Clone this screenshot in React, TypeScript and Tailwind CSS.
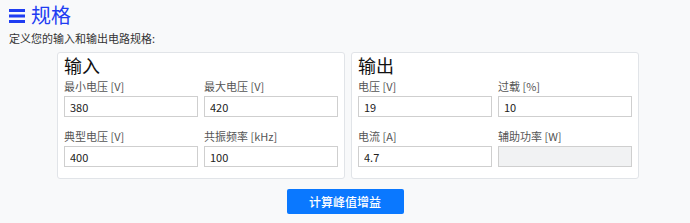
import React from "react";

const font = "font-['Noto_Sans_CJK_SC','Noto_Sans',sans-serif]";

type Field = { label: string; value: string; disabled?: boolean };

const Panel = ({ title, fields }: { title: string; fields: Field[] }) => (
  <div className="w-[288px] bg-white border border-[#e1e4e8] rounded-[3px] px-[6px] pt-[1px] pb-[11px]">
    <h2 className="text-[18px] leading-[22px] font-normal text-[#111] mb-[3px]">{title}</h2>
    <div className="grid grid-cols-2 gap-x-[6px] gap-y-[12px]">
      {fields.map((f) => (
        <div key={f.label}>
          <label className="block text-[11px] leading-[14px] text-[#555] mb-[3px]">{f.label}</label>
          <input
            readOnly
            disabled={f.disabled}
            value={f.value}
            className={
              "block w-full h-[21px] border border-[#cfcfcf] px-[5px] text-[11px] text-[#222] outline-none " +
              (f.disabled ? "bg-[#f1f2f3]" : "bg-white")
            }
          />
        </div>
      ))}
    </div>
  </div>
);

const App = () => {
  return (
    <div className={`${font} min-h-[223px] bg-[#f8f9fa] pt-[3px]`}>
      <div className="px-[9px]">
        <div className="flex items-center gap-[6px] h-[24px]">
          <svg width="16" height="14" viewBox="0 0 16 14" className="mt-[1px]">
            <rect x="0" y="0" width="16" height="3" fill="#1f3df2" />
            <rect x="0" y="5.5" width="16" height="3" fill="#1f3df2" />
            <rect x="0" y="11" width="16" height="3" fill="#1f3df2" />
          </svg>
          <h1 className="text-[20px] leading-[24px] font-normal text-[#1f3df2]">规格</h1>
        </div>
        <p className="text-[11px] leading-[16px] text-[#333] mt-[3px]">定义您的输入和输出电路规格:</p>
      </div>

      <div className="flex justify-center gap-[6px] pl-[6px] mt-[6px]">
        <Panel
          title="输入"
          fields={[
            { label: "最小电压 [V]", value: "380" },
            { label: "最大电压 [V]", value: "420" },
            { label: "典型电压 [V]", value: "400" },
            { label: "共振频率 [kHz]", value: "100" },
          ]}
        />
        <Panel
          title="输出"
          fields={[
            { label: "电压 [V]", value: "19" },
            { label: "过载 [%]", value: "10" },
            { label: "电流 [A]", value: "4.7" },
            { label: "辅助功率 [W]", value: "", disabled: true },
          ]}
        />
      </div>

      <div className="flex justify-center mt-[10px]">
        <button className="w-[117px] h-[25px] bg-[#0a78ff] text-white text-[12px] font-medium rounded-[2px]">
          计算峰值增益
        </button>
      </div>
    </div>
  );
};

export default App;
